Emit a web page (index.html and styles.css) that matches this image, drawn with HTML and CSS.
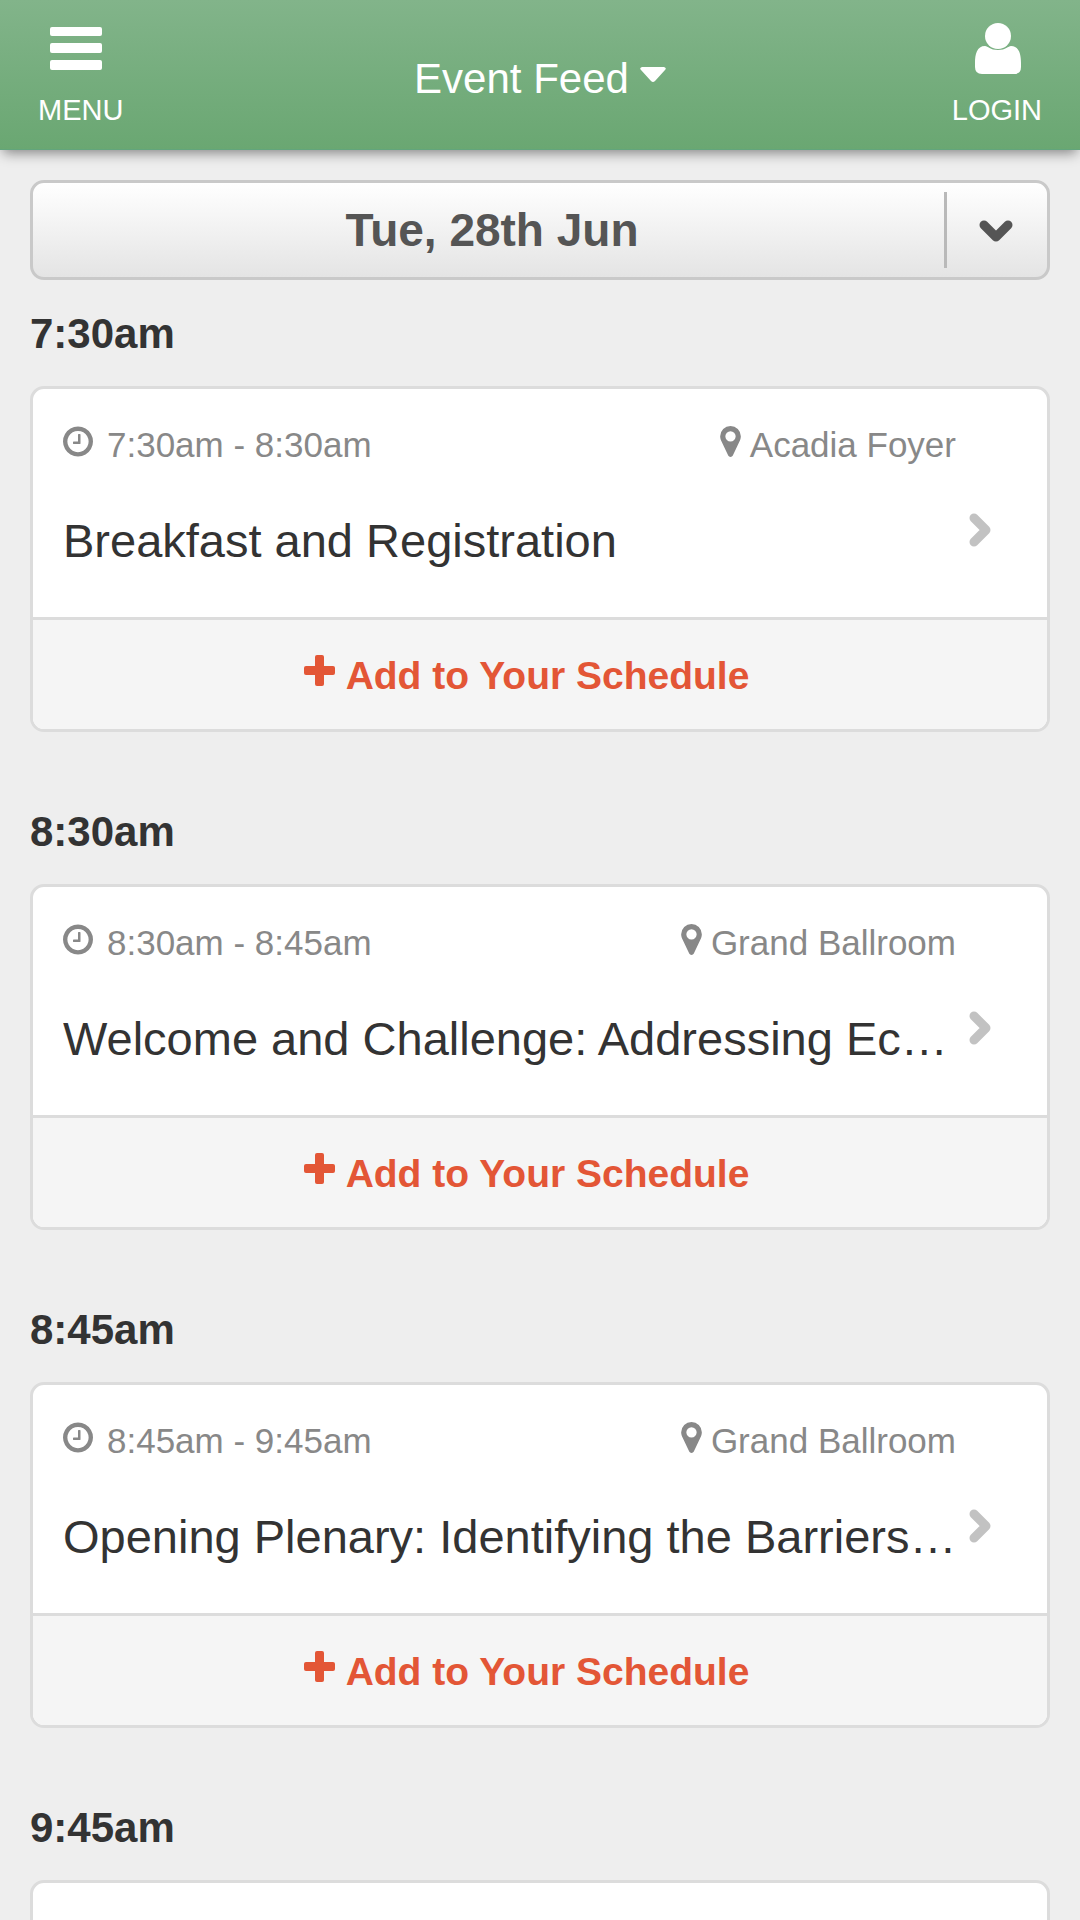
FILE: index.html
```html
<!DOCTYPE html>
<html lang="en">
<head>
<meta charset="utf-8">
<meta name="viewport" content="width=device-width, initial-scale=1">
<title>Event Feed</title>
<link rel="stylesheet" href="styles.css">
</head>
<body>
<svg class="sprite" aria-hidden="true">
  <symbol id="clock" viewBox="128 128 1536 1536"><path d="M1024 544v448q0 14-9 23t-23 9h-320q-14 0-23-9t-9-23v-64q0-14 9-23t23-9h224v-352q0-14 9-23t23-9h64q14 0 23 9t9 23zm416 352q0-148-73-273t-198-198-273-73-273 73-198 198-73 273 73 273 198 198 273 73 273-73 198-198 73-273zm224 0q0 209-103 385.500t-279.500 279.500-385.500 103-385.500-103-279.500-279.500-103-385.500 103-385.500 279.500-279.500 385.500-103 385.500 103 279.500 279.500 103 385.500z"/></symbol>
  <symbol id="pin" viewBox="384 128 1024 1536"><path d="M1152 640q0-106-75-181t-181-75-181 75-75 181 75 181 181 75 181-75 75-181zm256 0q0 109-33 179l-364 774q-16 33-47.500 52t-67.500 19-67.500-19-46.500-52l-365-774q-33-70-33-179 0-212 150-362t362-150 362 150 150 362z"/></symbol>
  <symbol id="plus" viewBox="0 0 31 31"><rect x="11" width="9" height="31" rx="2"/><rect y="11" width="31" height="9" rx="2"/></symbol>
  <symbol id="chevron" viewBox="0 0 22 34"><path d="M5 5L17 17L5 29" fill="none" stroke="currentColor" stroke-width="9" stroke-linecap="round" stroke-linejoin="round"/></symbol>
</svg>
<div class="app">
  <header class="topbar">
    <button class="nav-button" type="button">
      <svg class="nav-icon" viewBox="0 0 62 52" aria-hidden="true"><rect y="5" width="52" height="9" rx="2"/><rect y="21" width="52" height="10" rx="2"/><rect y="38" width="52" height="10" rx="2"/></svg>
      MENU
    </button>
    <h1 class="heading">
      <button class="feed-button" type="button">Event Feed
        <svg class="caret" viewBox="0 0 26 24" aria-hidden="true"><path d="M2 0H24Q27 1 25 3L15 14Q13 16 11 14L1 3Q-1 1 2 0Z"/></svg>
      </button>
    </h1>
    <button class="nav-button" type="button">
      <svg class="nav-icon nav-icon-user" viewBox="0 0 48 52" aria-hidden="true"><circle cx="25" cy="14" r="13"/><path d="M12 24C4 24 2 32 2 41V45Q2 52 9 52H41Q48 52 48 45V41C48 32 46 24 38 24C35 24 33 28 25 28S15 24 12 24Z"/></svg>
      LOGIN
    </button>
  </header>
  <main class="feed">
    <div class="day-picker">
      <select class="day-select" aria-label="Day"><option>Tue, 28th Jun</option></select>
      <span class="day-arrow"><svg class="day-chevron" viewBox="0 0 34 22" aria-hidden="true"><path d="M5 5L17 17L29 5"/></svg></span>
    </div>

    <section class="slot">
      <h2 class="slot-time">7:30am</h2>
      <article class="card">
        <a class="card-body" href="#breakfast">
          <span class="meta">
            <span class="time"><svg class="icon-clock" aria-hidden="true"><use href="#clock"/></svg>7:30am - 8:30am</span>
            <span class="place"><svg class="icon-pin" aria-hidden="true"><use href="#pin"/></svg>Acadia Foyer</span>
          </span>
          <span class="title-row"><span class="title">Breakfast and Registration</span><svg class="icon-chevron" aria-hidden="true"><use href="#chevron"/></svg></span>
        </a>
        <button class="add" type="button"><svg class="icon-plus" aria-hidden="true"><use href="#plus"/></svg>Add to Your Schedule</button>
      </article>
    </section>

    <section class="slot">
      <h2 class="slot-time">8:30am</h2>
      <article class="card">
        <a class="card-body" href="#welcome">
          <span class="meta">
            <span class="time"><svg class="icon-clock" aria-hidden="true"><use href="#clock"/></svg>8:30am - 8:45am</span>
            <span class="place"><svg class="icon-pin" aria-hidden="true"><use href="#pin"/></svg>Grand Ballroom</span>
          </span>
          <span class="title-row"><span class="title">Welcome and Challenge: Addressing Ec…</span><svg class="icon-chevron" aria-hidden="true"><use href="#chevron"/></svg></span>
        </a>
        <button class="add" type="button"><svg class="icon-plus" aria-hidden="true"><use href="#plus"/></svg>Add to Your Schedule</button>
      </article>
    </section>

    <section class="slot">
      <h2 class="slot-time">8:45am</h2>
      <article class="card">
        <a class="card-body" href="#plenary">
          <span class="meta">
            <span class="time"><svg class="icon-clock" aria-hidden="true"><use href="#clock"/></svg>8:45am - 9:45am</span>
            <span class="place"><svg class="icon-pin" aria-hidden="true"><use href="#pin"/></svg>Grand Ballroom</span>
          </span>
          <span class="title-row"><span class="title">Opening Plenary: Identifying the Barriers…</span><svg class="icon-chevron" aria-hidden="true"><use href="#chevron"/></svg></span>
        </a>
        <button class="add" type="button"><svg class="icon-plus" aria-hidden="true"><use href="#plus"/></svg>Add to Your Schedule</button>
      </article>
    </section>

    <section class="slot">
      <h2 class="slot-time">9:45am</h2>
      <article class="card card-pending"></article>
    </section>
  </main>
</div>
</body>
</html>
```
FILE: styles.css
```css
* {
  box-sizing: border-box;
}

body {
  margin: 0;
  background: #eeeeee;
  color: #333333;
  font-family: "Liberation Sans", Arial, sans-serif;
}

button,
select {
  margin: 0;
  padding: 0;
  border: 0;
  background: none;
  color: inherit;
  font: inherit;
  cursor: pointer;
}

svg {
  display: block;
  flex: none;
  fill: currentColor;
}

.sprite {
  display: none;
}

.app {
  display: flex;
  flex-direction: column;
  height: 100vh;
}

/* Top bar */
.topbar {
  position: relative;
  z-index: 1;
  flex: none;
  display: grid;
  grid-template-columns: 1fr auto 1fr;
  align-items: center;
  padding: 22px 38px 21px;
  border-bottom: 1px solid #62a57c;
  background: linear-gradient(#82b48a, #6aa772);
  box-shadow: 0 6px 12px -3px rgba(0, 0, 0, 0.45);
  color: #ffffff;
}

.nav-button {
  display: flex;
  flex-direction: column;
  align-items: center;
  gap: 18px;
  justify-self: start;
  font-size: 29px;
  line-height: 36px;
}

.nav-button:last-child {
  justify-self: end;
}

.nav-icon {
  width: 62px;
  height: 52px;
}

.nav-icon-user {
  width: 48px;
}

.heading {
  margin: 0;
  padding-top: 8px;
  font-size: 42px;
  font-weight: 400;
  line-height: 48px;
}

.feed-button {
  display: flex;
  align-items: center;
  gap: 11px;
}

.caret {
  width: 26px;
  height: 24px;
}

/* Feed */
.feed {
  flex: 1;
  min-height: 0;
  padding: 30px;
  overflow-y: auto;
  scrollbar-width: none;
}

.day-picker {
  position: relative;
  border: 3px solid #c9c9c9;
  border-radius: 14px;
  background: linear-gradient(#ffffff, #e4e4e4);
  color: #555555;
}

.day-select {
  display: block;
  width: 100%;
  height: 94px;
  padding-right: 96px;
  appearance: none;
  font-size: 46px;
  font-weight: 700;
  text-align: center;
  text-align-last: center;
}

.day-arrow {
  position: absolute;
  top: 9px;
  right: 0;
  bottom: 9px;
  width: 103px;
  padding: 28px 32px;
  border-left: 3px solid #b9b9b9;
  pointer-events: none;
}

.day-chevron {
  width: 34px;
  height: 22px;
  fill: none;
  stroke: currentColor;
  stroke-width: 9px;
  stroke-linecap: round;
  stroke-linejoin: round;
}

.slot {
  margin-top: 30px;
}

.slot + .slot {
  margin-top: 76px;
}

.slot-time {
  margin: 0 0 28px;
  font-size: 42px;
  line-height: 48px;
}

.card {
  overflow: hidden;
  border: 3px solid #dcdcdc;
  border-radius: 14px;
  background: #ffffff;
}

.card-pending {
  min-height: 346px;
}

.card-body {
  display: flex;
  flex-direction: column;
  gap: 47px;
  padding: 35px 56px 48px 30px;
  color: inherit;
  text-decoration: none;
}

.meta {
  display: flex;
  justify-content: space-between;
  padding-right: 35px;
  color: #888888;
  font-size: 35px;
  line-height: 42px;
}

.time,
.place {
  display: flex;
  align-items: flex-start;
}

.time {
  gap: 14px;
}

.place {
  gap: 9px;
}

.icon-clock,
.icon-pin {
  width: 30px;
  height: 31px;
  margin-top: 2px;
}

.icon-pin {
  width: 21px;
}

.title-row {
  display: flex;
  align-items: flex-start;
  gap: 13px;
}

.title {
  flex: 1;
  min-width: 0;
  overflow: hidden;
  font-size: 47px;
  line-height: 56px;
  white-space: nowrap;
}

.icon-chevron {
  width: 22px;
  height: 34px;
  color: #c2c2c2;
}

.add {
  display: flex;
  align-items: flex-start;
  justify-content: center;
  gap: 11px;
  width: 100%;
  padding: 32px 27px 29px 0;
  border-top: 3px solid #dcdcdc;
  background: #f5f5f5;
  color: #e35636;
  font-size: 39px;
  font-weight: 700;
  line-height: 48px;
}

.icon-plus {
  width: 31px;
  height: 31px;
  margin-top: 3px;
}
```
